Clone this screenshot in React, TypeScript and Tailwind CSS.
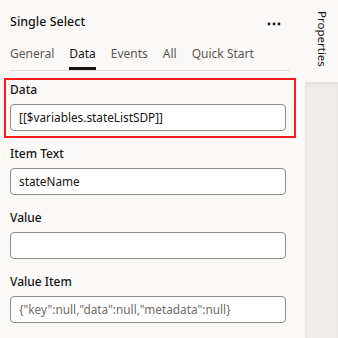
const tabs = ["General", "Data", "Events", "All", "Quick Start"];

function Field({ label, value, placeholder }: { label: string; value?: string; placeholder?: string }) {
  return (
    <div className="flex flex-col">
      <label className="h-[16px] leading-[16px] text-[12px] font-medium text-[#161513] mb-[6px]">{label}</label>
      <div className="w-[276px] h-[27px] flex items-center px-[8px] bg-white border border-[#8f8b87] rounded-[4px] text-[11.8px]">
        {value ? (
          <span className="text-[#161513]">{value}</span>
        ) : (
          <span className="text-[#6f6c69]">{placeholder}</span>
        )}
      </div>
    </div>
  );
}

export default function App() {
  return (
    <div
      className="w-[338px] h-[338px] flex bg-[#faf9f8] overflow-hidden"
      style={{ fontFamily: '"Noto Sans", "Open Sans", sans-serif' }}
    >
      {/* Panel */}
      <div className="w-[305px] flex flex-col">
        <div className="pl-[10px] pr-[15px]">
          <div className="mt-[13px] h-[18px] flex items-center justify-between">
            <h2 className="text-[12.5px] font-medium text-[#161513]">Single Select</h2>
            <svg width="14" height="4" viewBox="0 0 14 4" className="mr-[9px] mt-[4px]">
              <circle cx="2" cy="2" r="1.4" fill="#161513" />
              <circle cx="7" cy="2" r="1.4" fill="#161513" />
              <circle cx="12" cy="2" r="1.4" fill="#161513" />
            </svg>
          </div>
          <div className="mt-[7px] h-[33px] flex gap-[15px] border-b border-[#dedbd8]">
            {tabs.map((t) => (
              <div
                key={t}
                className={
                  t === "Data"
                    ? "relative flex items-center pb-[1px] text-[12px] text-[#161513]"
                    : "relative flex items-center pb-[1px] text-[12px] text-[#5b5752]"
                }
              >
                {t}
                {t === "Data" && <span className="absolute left-0 right-0 bottom-0 h-[3px] bg-[#161513]" />}
              </div>
            ))}
          </div>
        </div>

        <div className="mt-[7px] ml-[4px] w-[292px] border-2 border-[#ff1a1a] pl-[4px] pt-[2px] pb-[5px]">
          <Field label="Data" value="[[$variables.stateListSDP]]" />
        </div>

        <div className="pl-[10px] mt-[8px] flex flex-col gap-[15px]">
          <Field label="Item Text" value="stateName" />
          <Field label="Value" />
          <Field label="Value Item" placeholder={'{"key":null,"data":null,"metadata":null}'} />
        </div>
      </div>

      {/* Side rail */}
      <div className="w-[33px] flex flex-col">
        <div className="h-[82px] flex pl-[11px] pt-[11px]">
          <span className="text-[11.5px] text-[#161513] [writing-mode:vertical-rl] leading-none">Properties</span>
        </div>
        <div className="flex-1 bg-[#f1efed] shadow-[inset_0_3px_4px_rgba(0,0,0,0.06)]" />
      </div>
    </div>
  );
}
